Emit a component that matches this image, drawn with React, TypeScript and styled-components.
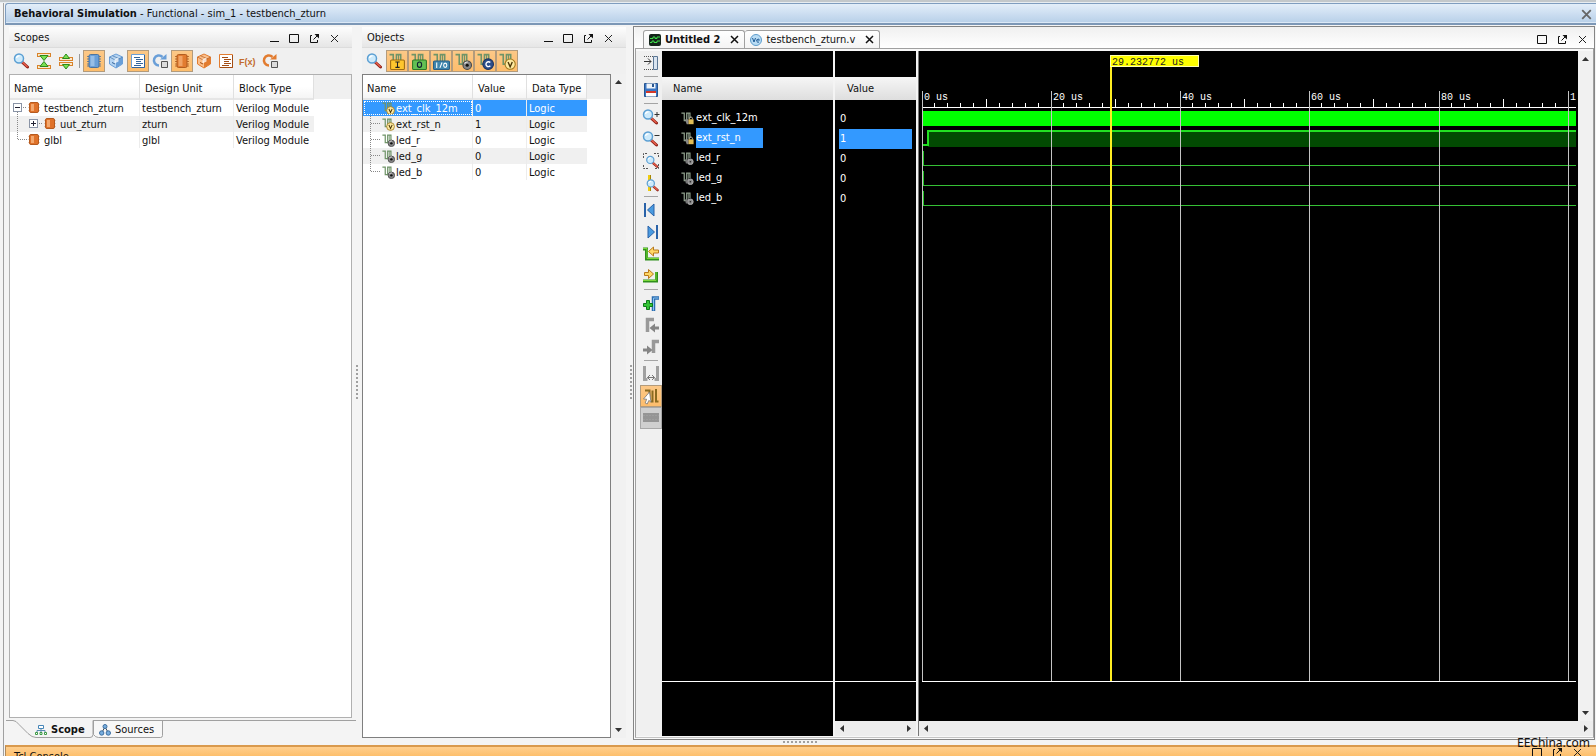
import React from 'react';
import styled, { createGlobalStyle, css } from 'styled-components';

const Global = createGlobalStyle`
  *, *::before, *::after { box-sizing: border-box; }
  html, body, #root { height: 100%; }
  body {
    margin: 0;
    overflow: hidden;
    background: #f4f4f4;
    color: #111;
    font: 11px/16px Tahoma, "DejaVu Sans Condensed", "DejaVu Sans", sans-serif;
  }
  button { font: inherit; color: inherit; background: none; border: 0; padding: 0; margin: 0; }
  ul { list-style: none; margin: 0; padding: 0; }
  h1, h2 { font: inherit; margin: 0; }
  svg { display: block; flex: none; }
`;

/* ---------- shell ---------- */

const Shell = styled.div`
  position: relative;
  display: flex;
  flex-direction: column;
  height: 100vh;
  overflow: hidden;
`;

const TopStrip = styled.div`
  flex: 0 0 3px;
  background: #c3c8cb;
  border-bottom: 1px solid #e8edf1;
`;

const Frame = styled.div`
  flex: 1;
  min-height: 0;
  display: flex;
  flex-direction: column;
  margin-left: 3px;
  border-left: 1px solid #a0a0a0;
  padding-left: 1px;
`;

const TitleBar = styled.header`
  flex: 0 0 22px;
  display: flex;
  align-items: center;
  justify-content: space-between;
  padding: 1px 0 0 8px;
  border: 1px solid #7f9dbf;
  border-right: 0;
  border-bottom: 2px solid #7c97b6;
  border-radius: 3px 0 0 0;
  background: linear-gradient(#e3eef9, #cfe0f2 45%, #b7cfe8);
  box-shadow: inset 0 -1px 0 #dbe8f6;
`;

const Main = styled.main`
  flex: 1;
  min-height: 0;
  display: flex;
`;

const SashColumn = styled.div<{ $width: number; $end?: boolean }>`
  flex: 0 0 ${(p) => p.$width}px;
  display: flex;
  align-items: center;
  justify-content: ${(p) => (p.$end ? 'flex-end' : 'center')};
`;

const SashRow = styled.div`
  flex: 0 0 5px;
  display: flex;
  align-items: center;
  justify-content: center;
`;

const Console = styled.section`
  flex: 0 0 11px;
  display: flex;
  justify-content: space-between;
  overflow: hidden;
  padding: 2px 9px 0 8px;
  border-top: 2px solid #d99a4e;
  border-left: 1px solid #b08a5a;
  background: linear-gradient(#ffcf8e, #fdbf6c);
`;

const ConsoleTitle = styled.h2`
  line-height: 16px;
`;

const Watermark = styled.div`
  position: absolute;
  right: 6px;
  bottom: 4px;
  font: 12px/18px "Noto Sans", sans-serif;
  color: #111;
`;

/* ---------- docked panels ---------- */

const Panel = styled.section<{ $width: number }>`
  flex: 0 0 ${(p) => p.$width}px;
  min-width: 0;
  display: flex;
  flex-direction: column;
  padding: 2px 0;
`;

const PanelHeader = styled.div`
  flex: 0 0 21px;
  display: flex;
  align-items: center;
  justify-content: space-between;
  padding: 2px 8px 0 5px;
  background: linear-gradient(#fdfdfd, #e6e6e6);
  border-bottom: 1px solid #dcdcdc;
`;

const Controls = styled.div`
  display: flex;
  align-items: center;
`;

const ControlButton = styled.button`
  width: 20px;
  height: 18px;
  display: flex;
  align-items: center;
  justify-content: center;
`;

const ToolBar = styled.div`
  flex: 0 0 26px;
  display: flex;
  align-items: center;
  padding-left: 2px;
  background: #f0f0f0;
`;

const ToolButton = styled.button<{ $on?: boolean; $dim?: boolean }>`
  width: 22px;
  height: 22px;
  flex: none;
  display: flex;
  align-items: center;
  justify-content: center;
  ${(p) =>
    p.$on &&
    css`
      background: linear-gradient(#fcc887, #fdbd6c);
      border: 1px solid #b39b7c;
    `}
  ${(p) =>
    p.$dim &&
    css`
      background: #cfcfcf;
      border: 1px solid #a8a8a8;
    `}
`;

const ToolDivider = styled.div`
  width: 6px;
  height: 14px;
  padding-left: 2px;
  &::before {
    content: '';
    display: block;
    width: 1px;
    height: 14px;
    background: #999;
  }
`;

const PanelBody = styled.div`
  flex: 1;
  min-height: 0;
  display: flex;
`;

const GridPane = styled.div<{ $dark?: boolean }>`
  flex: 1;
  min-width: 0;
  border: 1px solid ${(p) => (p.$dark ? '#7f7f7f' : '#b0b0b0')};
  background: linear-gradient(#f0f0f0, #f0f0f0) 0 0 / 100% 24px no-repeat, #fff;
`;

const Grid = styled.table<{ $width: number }>`
  width: ${(p) => p.$width}px;
  table-layout: fixed;
  border-collapse: separate;
  border-spacing: 0;
`;

const HeadCell = styled.th`
  height: 25px;
  padding: 4px 0 0 4px;
  text-align: left;
  font-weight: normal;
  white-space: nowrap;
  border-right: 1px solid #e0e0e0;
  border-bottom: 2px solid #e6e6e6;
  background: linear-gradient(#fff, #fff 50%, #f5f5f5);
  & + & { padding-left: 5px; }
`;

const Row = styled.tr<{ $striped?: boolean; $selected?: boolean }>`
  background: ${(p) => (p.$selected ? '#3399ff' : p.$striped ? '#f0f0f0' : '#fff')};
  color: ${(p) => (p.$selected ? '#fff' : 'inherit')};
`;

const Cell = styled.td<{ $focus?: boolean; $tree?: boolean }>`
  height: 16px;
  line-height: 14px;
  padding: ${(p) => (p.$tree ? 0 : 2)}px 0 0 2px;
  white-space: nowrap;
  border-right: 1px solid #ececec;
  &:last-child { border-right: 0; }
  ${(p) =>
    p.$focus &&
    css`
      outline: 1px dotted #fff;
      outline-offset: -2px;
    `}
`;

const TreeCell = styled.div`
  display: flex;
  align-items: center;
  height: 16px;
`;

const TreeLabel = styled.span<{ $gap: number }>`
  margin-left: ${(p) => p.$gap}px;
  padding-top: 2px;
`;

const Label = styled.span`
  margin-left: 4px;
`;

const ScrollColumn = styled.div`
  flex: 0 0 15px;
  display: flex;
  flex-direction: column;
  align-items: center;
  justify-content: space-between;
  padding: 4px 0;
  background: #f1f1f1;
`;

const ScrollRow = styled.div`
  flex: 0 0 15px;
  display: flex;
  align-items: center;
  justify-content: space-between;
  padding: 0 4px;
  background: #ededed;
`;

/* Right edge of the wave pane: the vertical bar above the end of the horizontal one. */
const ScrollSide = styled.div`
  flex: 0 0 14px;
  display: flex;
  flex-direction: column;
  & > :first-child { flex: 1; min-height: 0; }
`;

const BottomTabs = styled.div`
  position: relative;
  flex: 0 0 20px;
  display: flex;
  margin: 0 -3px;
  padding-top: 2px;
`;

const BottomTabShape = styled.svg`
  position: absolute;
  left: 0;
  top: 2px;
`;

const BottomTab = styled.button<{ $active?: boolean }>`
  position: relative;
  height: 18px;
  width: ${(p) => (p.$active ? 87 : 69)}px;
  display: flex;
  align-items: center;
  padding-top: 2px;
  padding-left: ${(p) => (p.$active ? 29 : 6)}px;
  font-weight: ${(p) => (p.$active ? 'bold' : 'normal')};
`;

/* ---------- waveform editor ---------- */

const Editor = styled.section`
  flex: 1;
  min-width: 0;
  display: flex;
  flex-direction: column;
  margin: 1px 1px 0 0;
  border: 1px solid #858585;
  padding: 0 0 1px 1px;
  background: #fafafa;
`;

const EditorTabs = styled.div`
  flex: 0 0 21px;
  display: flex;
  align-items: flex-end;
  padding-left: 8px;
  background: linear-gradient(#f0f0f0, #fff);
`;

const EditorTab = styled.button<{ $active?: boolean }>`
  height: 18px;
  display: flex;
  align-items: center;
  padding: 0 5px;
  border: 1px solid #a0a0a0;
  border-bottom: 0;
  border-radius: 3px 3px 0 0;
  background: linear-gradient(#fff, #f4f4f4);
  font-weight: ${(p) => (p.$active ? 'bold' : 'normal')};
  & + & { border-left: 0; }
  & svg:last-child { margin-left: 10px; }
`;

const EditorControls = styled(Controls)`
  margin-left: auto;
  padding-right: 2px;
`;

const EditorBody = styled.div`
  flex: 1;
  min-height: 0;
  display: flex;
  border: 1px solid #a0a0a0;
  border-bottom-color: #c4c4c4;
  padding: 2px 0 1px 0;
  background: #f8f8f8;
`;

const SideTools = styled.div`
  flex: 0 0 26px;
  display: flex;
  flex-direction: column;
  align-items: flex-end;
  padding-top: 1px;
  background: #f0f0f0;
`;

const SideDivider = styled.div`
  flex: 0 0 5px;
  width: 14px;
  margin-right: 4px;
  padding-top: 2px;
  &::before {
    content: '';
    display: block;
    height: 1px;
    background: #a4a4a4;
  }
`;

const SignalPane = styled.div<{ $width: number }>`
  flex: 0 0 ${(p) => p.$width}px;
  display: flex;
  flex-direction: column;
  padding-top: 26px;
  box-sizing: content-box;
  border-right: 2px solid #f4f4f4;
  background: #000;
  color: #fff;
`;

const SignalHeader = styled.div<{ $indent: number }>`
  flex: 0 0 22px;
  line-height: 23px;
  padding-left: ${(p) => p.$indent}px;
  background: linear-gradient(#f6f6f6, #dedede);
  color: #111;
`;

const SignalList = styled.ul<{ $top: number }>`
  flex: 1;
  min-height: 0;
  padding-top: ${(p) => p.$top}px;
  border-bottom: 1px solid #fff;
`;

const Signal = styled.li`
  display: flex;
  align-items: center;
  height: 20px;
  padding-left: 19px;
`;

const SignalName = styled.span<{ $selected?: boolean }>`
  height: 20px;
  line-height: 20px;
  width: 67px;
  margin-left: 2px;
  background: ${(p) => (p.$selected ? '#3399ff' : 'transparent')};
`;

const SignalValue = styled.li<{ $selected?: boolean }>`
  height: 20px;
  line-height: 20px;
  margin: 0 4px;
  padding-left: 1px;
  background: ${(p) => (p.$selected ? '#3399ff' : 'transparent')};
`;

const PaneFooter = styled.div<{ $height: number }>`
  flex: 0 0 ${(p) => p.$height}px;
  background: #000;
`;

const WavePane = styled.div`
  flex: 1;
  min-width: 0;
  display: flex;
  flex-direction: column;
  border-left: 1px solid #777;
  background: #000;
`;

const WavePlot = styled.div`
  position: relative;
  flex: 1;
  min-height: 0;
  margin: 0 2px 0 3px;
  border-bottom: 1px solid #fff;
`;

const WaveSvg = styled.svg`
  position: absolute;
  inset: 0;
  width: 100%;
  height: 100%;
  overflow: hidden;
  font: 10px "Liberation Mono", monospace;
`;

/* ---------- icons ---------- */

const MinimizeIcon = () => (
  <svg width="11" height="11"><path d="M1 8.500h9" stroke="#111" /></svg>
);
const MaximizeIcon = () => (
  <svg width="11" height="11"><path d="M.5 1.500h9v8h-9z" fill="none" stroke="#111" /></svg>
);
const FloatIcon = () => (
  <svg width="11" height="11"><path d="M3 2.500H1.500v7h7V7M4.500 6.500l4-4" fill="none" stroke="#111" /><path d="M5.500 1H10v4.500z" fill="#111" /></svg>
);
const CloseIcon = ({ weight = 1, color = '#222', size = 9 }: { weight?: number; color?: string; size?: number }) => (
  <svg width={size} height={size} viewBox="0 0 9 9"><path d="M1 1l7 7M8 1L1 8" stroke={color} strokeWidth={weight} /></svg>
);

const LensShape = () => (
  <>
    <path d="M9.500 9.500l5 4.500" stroke="#8d1f16" strokeWidth="3" strokeLinecap="round" />
    <path d="M9.500 9.300l4.600 4.200" stroke="#e8604c" strokeWidth="1.500" strokeLinecap="round" />
    <circle cx="6" cy="5.500" r="4.500" fill="#cdeafb" stroke="#5b9fd3" strokeWidth="1.500" />
    <path d="M3.500 5a2.500 2.500 0 0 1 3-2" stroke="#fff" fill="none" strokeWidth="1.300" />
  </>
);
const LensIcon = ({ mark }: { mark?: '+' | '-' }) => (
  <svg width="18" height="16" viewBox="0 0 18 16">
    <LensShape />
    {mark && <path d={mark === '+' ? 'M12.500 5.500h5M15 3v5' : 'M12.500 4.500h5'} stroke="#333" />}
  </svg>
);
const FitIcon = () => (
  <svg width="18" height="18" viewBox="0 0 18 18">
    <path d="M1.500 6V1.500H6M12 1.500h4.500V6M16.500 12v4.500H12M6 16.500H1.500V12" fill="none" stroke="#555" strokeDasharray="2 1" />
    <g transform="translate(3.500 3.500) scale(.8)"><LensShape /></g>
  </svg>
);
const CursorZoomIcon = () => (
  <svg width="18" height="18" viewBox="0 0 18 18">
    <path d="M7.500 1v16" stroke="#f0cc10" strokeWidth="3" />
    <path d="M8.500 1v5M8.500 13v4" stroke="#a88600" />
    <g transform="translate(4 5) scale(.8)"><LensShape /></g>
  </svg>
);
const CollapseAllIcon = () => (
  <svg width="16" height="16" viewBox="0 0 16 16">
    <path d="M1 2h14M1 14h14" stroke="#d8822a" strokeWidth="4" />
    <path d="M2 2h12M2 14h12" stroke="#fbe9cc" strokeWidth="2" />
    <path d="M4 2.500h8L8 7.500zM4 13.500h8L8 8.500z" fill="#7ce052" stroke="#2b8b1c" />
  </svg>
);
const ExpandAllIcon = () => (
  <svg width="16" height="16" viewBox="0 0 16 16">
    <path d="M1 6h14M1 11h14" stroke="#d8822a" strokeWidth="4" />
    <path d="M2 6h12M2 11h12" stroke="#fbe9cc" strokeWidth="2" />
    <path d="M4.500 5.500h7L8 1zM4.500 11.500h7L8 16z" fill="#7ce052" stroke="#2b8b1c" />
  </svg>
);

const BLUE = { dark: '#35659b', mid: '#6a9fd8', light: '#b5d4f2' };
const ORANGE = { dark: '#a34d14', mid: '#e27c30', light: '#fbbf8b' };
type Tone = typeof BLUE;

const ChipIcon = ({ tone }: { tone: Tone }) => (
  <svg width="16" height="16" viewBox="0 0 16 16">
    <path d="M1 3.500h14M1 6h14M1 8.500h14M1 11h14M1 13h14" stroke={tone.dark} opacity=".7" />
    <rect x="3" y="1.500" width="10" height="13" rx="1.500" fill={tone.mid} stroke={tone.dark} strokeOpacity=".8" />
    <path d="M4.500 3h4v10h-4z" fill={tone.light} opacity=".6" />
  </svg>
);
const TreeChipIcon = () => (
  <svg width="14" height="14" viewBox="0 0 14 14">
    <path d="M1.500 3.500h11M1.500 6.500h11M1.500 9.500h11" stroke="#a34d14" opacity=".5" />
    <rect x="2.500" y="1.500" width="9" height="10" rx="1.500" fill="#df722a" stroke="#b65a1e" />
    <path d="M4 3h3v7H4z" fill="#fbbf8b" opacity=".7" />
  </svg>
);
const CubeIcon = ({ tone }: { tone: Tone }) => (
  <svg width="16" height="16" viewBox="0 0 16 16">
    <path d="M8 1l6.500 3v7L8 15l-6.500-4V4z" fill={tone.light} stroke={tone.mid} />
    <path d="M8 7.500v7.500l6-4V4.500z" fill={tone.mid} />
    <path d="M4.500 2.800l7 3M1.500 4L8 7.500 14.500 4" stroke={tone.dark} strokeOpacity=".6" fill="none" />
    <path d="M6.500 6.500l4-2v4l-4 2z" fill="#fff" opacity=".75" />
    <path d="M4 9.500l3 1.500" stroke={tone.dark} />
  </svg>
);
const DocIcon = ({ tone }: { tone: Tone }) => (
  <svg width="16" height="16" viewBox="0 0 16 16">
    <path d="M1.500 1.500h13v13h-13z" fill="#fff" stroke={tone.mid} />
    <path d="M14.500 2v12.500H2" fill="none" stroke={tone.dark} />
    <path d="M4 4.500h6M6 6.500h7M6 8.500h5M6 10.500h7M4 12.500h7" stroke={tone.dark} />
  </svg>
);
const CycleIcon = ({ tone }: { tone: Tone }) => (
  <svg width="18" height="16" viewBox="0 0 18 16">
    <path d="M11.500 4A5 5 0 1 0 8 12.500" fill="none" stroke={tone.mid} strokeWidth="2.500" />
    <path d="M9 6.500h6.500V1z" fill={tone.mid} />
    <path d="M10.500 8.500h6v6h-6z" fill="#dcdcdc" stroke="#555" />
  </svg>
);
const FnIcon = () => (
  <svg width="18" height="16" viewBox="0 0 18 16">
    <text x="0" y="11.500" fontSize="9" fontWeight="bold" fontFamily="Liberation Sans, sans-serif" fill="#c26b2c">F(x)</text>
  </svg>
);

const SignalIcon = ({ kind, size = 13, wire = '#6f9468' }: { kind: 'I' | 'O' | 'I/O' | 'int' | 'C' | 'V' | 'lock' | 'gray'; size?: number; wire?: string }) => (
  <svg width={size} height={size} viewBox="0 0 16 16">
    <path d="M.5 1.500H4v9h3V1.500h4v6" fill="none" stroke={wire} strokeWidth="1.500" />
    <path d="M9 1.500v7" stroke={wire} />
    {kind === 'I' && <><rect x="1.500" y="6.500" width="13" height="9" rx="1" fill="#ffc62e" stroke="#a06c10" /><path d="M6 8.500h4M8 8.500v5M6 13.500h4" stroke="#222" /></>}
    {kind === 'O' && <><rect x="1.500" y="6.500" width="13" height="9" rx="1" fill="#63c054" stroke="#2c7a26" /><ellipse cx="8" cy="11" rx="2" ry="2.500" fill="none" stroke="#123" /></>}
    {kind === 'I/O' && <><rect x=".5" y="7.500" width="15" height="8" rx="1" fill="#3f86ad" stroke="#2a5f86" /><path d="M3.500 9v5M8.500 9l-2 5" stroke="#fff" /><ellipse cx="11.500" cy="11.500" rx="1.500" ry="2" fill="none" stroke="#fff" /></>}
    {kind === 'int' && <><circle cx="11.500" cy="11.500" r="4" fill="#888" stroke="#444" /><circle cx="11.500" cy="11.500" r="1.500" fill="#111" /><path d="M9 10a3 3 0 0 1 3-1.500" fill="none" stroke="#eee" /></>}
    {kind === 'C' && <><circle cx="10.500" cy="10.500" r="5" fill="#2c4f8c" stroke="#1c335e" /><path d="M12.500 9a2.300 2.300 0 1 0 0 3" fill="none" stroke="#fff" strokeWidth="1.300" /></>}
    {kind === 'V' && <><circle cx="10.500" cy="10.500" r="4.800" fill="#fde9a0" stroke="#a07a1c" /><path d="M8.500 8.500l2 4.500 2-4.500" fill="none" stroke="#4a3608" strokeWidth="1.300" /></>}
    {kind === 'lock' && <><rect x="9" y="9" width="6.500" height="6" fill="#e0bd58" /><path d="M10.500 9V7.500a1.800 1.800 0 0 1 3.500 0V9" fill="none" stroke="#d8d0b8" /><path d="M5 9h4v6H7z" fill="#888" /></>}
    {kind === 'gray' && <><circle cx="11.500" cy="12" r="3.500" fill="#8d8d8d" stroke="#bbb" /><circle cx="11.500" cy="12" r="1" fill="#222" /><path d="M5 9h3v5H6z" fill="#777" /></>}
  </svg>
);

const DockIcon = () => (
  <svg width="16" height="16" viewBox="0 0 16 16">
    <path d="M1 1.500h10M1 14.500h10" stroke="#555" strokeDasharray="1 1" />
    <path d="M1 6.500h7M5 3.500l3 3-3 3" fill="none" stroke="#333" />
    <path d="M10.500 1.500h4v13h-4z" fill="#d9e4f0" stroke="#5a7694" />
  </svg>
);
const SaveIcon = () => (
  <svg width="16" height="16" viewBox="0 0 16 16">
    <path d="M1.500 1.500h13v13h-13z" fill="#3b77c4" stroke="#27558f" />
    <path d="M3.500 1.500h9v5h-9z" fill="#eef3f8" />
    <path d="M9 2h2v3H9z" fill="#27558f" />
    <path d="M3 9h10v5.500H3z" fill="#fff" />
    <path d="M3 10h10" stroke="#d43a2a" strokeWidth="2" />
  </svg>
);
const StepIcon = ({ forward }: { forward?: boolean }) => (
  <svg width="16" height="16" viewBox="0 0 16 16">
    <g transform={forward ? 'translate(16 0) scale(-1 1)' : undefined}>
      <path d="M2 1v14" stroke="#2a62a8" strokeWidth="2" />
      <path d="M11 2v12L4.500 8z" fill="#4a9be0" stroke="#2a62a8" />
    </g>
  </svg>
);
const EdgeIcon = ({ forward }: { forward?: boolean }) => (
  <svg width="16" height="16" viewBox="0 0 16 16">
    <path d={forward ? 'M0 13h13.500V4' : 'M0 3h3.500v10H16'} fill="none" stroke="#2f8f1c" strokeWidth="3" />
    <path d={forward ? 'M0 12.500h13V4' : 'M0 2.500h4v10H16'} fill="none" stroke="#7bd83a" />
    {forward
      ? <path d="M1.500 4.500h4v-3l5 4.500-5 4.500v-3h-4z" fill="#ffd866" stroke="#b8791c" />
      : <path d="M15.500 4h-5V1L5.500 5.500l5 4.500V7h5z" fill="#ffd866" stroke="#b8791c" />}
  </svg>
);
const AddMarkerIcon = () => (
  <svg width="18" height="16" viewBox="0 0 18 16">
    <path d="M11.500 16V3H17" fill="none" stroke="#2b6cb0" strokeWidth="3.500" />
    <path d="M11.500 15.500V3H16.500" fill="none" stroke="#8cc4f0" />
    <path d="M4.500 5.500h3v3h3v3h-3v3h-3v-3h-3v-3h3z" fill="#35c435" stroke="#0d7a18" />
  </svg>
);
const GrayMarkerIcon = ({ forward }: { forward?: boolean }) => (
  <svg width="18" height="16" viewBox="0 0 18 16">
    {forward
      ? <><path d="M11.500 14V2.500H17" fill="none" stroke="#999" strokeWidth="3.500" /><path d="M1 9.500h4V6.500l5.500 4.500L5 15.500v-3H1z" fill="#858585" /></>
      : <><path d="M5.500 15V2.500H12" fill="none" stroke="#999" strokeWidth="3.500" /><path d="M17 9.500h-4V6.500l-5.500 4.500 5.500 4.500v-3h4z" fill="#858585" /></>}
  </svg>
);
const SwapIcon = () => (
  <svg width="18" height="16" viewBox="0 0 18 16">
    <path d="M2.500 0v13.500h3M15.500 0v13.500h-3" fill="none" stroke="#a0a0a0" strokeWidth="3" />
    <path d="M5.500 11.500h7M8 9l-2.500 2.500L8 14M10 9l2.500 2.500L10 14" fill="none" stroke="#777" />
  </svg>
);
const SnapIcon = () => (
  <svg width="18" height="18" viewBox="0 0 18 18">
    <path d="M3 3.500h4.500V13M9 14.500h1.500v-11M14 2v12.500h2.500" fill="none" stroke="#8a6a20" strokeWidth="2" />
    <path d="M7.500 5l-6 7 3.200.2L3.200 16l2 1 1.700-3.700 2.100 2z" fill="#fff" stroke="#777" strokeWidth=".8" />
  </svg>
);
const BarsIcon = () => (
  <svg width="18" height="10"><path d="M1 0h16v9H1z" fill="#959595" /><path d="M1 2.500h16M1 6.500h16" stroke="#9e9e9e" strokeDasharray="2 1" /></svg>
);

const WaveTabIcon = () => (
  <svg width="12" height="12" viewBox="0 0 12 12">
    <rect width="12" height="12" rx="2" fill="#14241a" />
    <path d="M1 4.500h3V3h2v1.500h2V3h3M1 8.500h2V7h2v1.500h3V7h3" fill="none" stroke="#3fe04a" />
  </svg>
);
const VerilogTabIcon = () => (
  <svg width="12" height="12" viewBox="0 0 12 12">
    <circle cx="6" cy="6" r="5.500" fill="#b9dcf4" stroke="#5c9ccc" />
    <path d="M2.500 4L4 8l1.500-4M6.500 6h3A1.500 1.500 0 1 0 9 8" fill="none" stroke="#1d5b96" />
  </svg>
);
const HierarchyIcon = () => (
  <svg width="12" height="12" viewBox="0 0 12 12">
    <path d="M6 4v3M2 9V6.500h8V9M6 6v3" fill="none" stroke="#5a8ab0" />
    <path d="M3.500 1.500h5v3h-5z" fill="#fff" stroke="#4686b8" />
    <path d="M.5 8.500h2v2h-2zM5 8.500h2v2H5zM9.500 8.500h2v2h-2z" fill="#fff" stroke="#3d9a44" />
  </svg>
);
const SourcesIcon = () => (
  <svg width="12" height="12" viewBox="0 0 12 12">
    <path d="M6 3L2.500 9M6 3l3.500 6" stroke="#345" />
    <circle cx="6" cy="2.500" r="2" fill="#79aede" stroke="#3c6ea0" />
    <circle cx="2.700" cy="9" r="2.200" fill="#79aede" stroke="#3c6ea0" />
    <circle cx="9.300" cy="9" r="2.200" fill="#79aede" stroke="#3c6ea0" />
  </svg>
);

const Arrow = ({ dir }: { dir: 'up' | 'down' | 'left' | 'right' }) => {
  const d = { up: 'M0 6l3.500-4L7 6z', down: 'M0 1h7L3.500 5z', left: 'M5 0v7L1 3.500z', right: 'M2 0v7l4-3.500z' }[dir];
  return <svg width="7" height="7"><path d={d} fill="#333" /></svg>;
};

const Dots = ({ vertical, count }: { vertical?: boolean; count: number }) => (
  <svg width={vertical ? 3 : count * 4} height={vertical ? count * 4 : 3}>
    {Array.from({ length: count }, (_, i) => (
      <rect key={i} x={vertical ? 0 : i * 4} y={vertical ? i * 4 : 0} width="2" height="2" fill="#a0a0a0" />
    ))}
  </svg>
);

/* Guide lines and the expander to the left of a tree entry. */
const Guide = ({ width, d, box, open }: { width: number; d: string; box?: number; open?: boolean }) => (
  <svg width={width} height="16">
    <path d={d} fill="none" stroke="#888" strokeDasharray="1 1" />
    {box !== undefined && (
      <>
        <rect x={box + 0.5} y="3.500" width="8" height="8" fill="#fff" stroke="#8a94a6" />
        <path d={`M${box + 2} 7.500h5${open ? '' : `M${box + 4.5} 5v5`}`} stroke="#223" />
      </>
    )}
  </svg>
);

/* ---------- content ---------- */

const PanelControls = () => (
  <Controls>
    <ControlButton aria-label="Minimize"><MinimizeIcon /></ControlButton>
    <ControlButton aria-label="Maximize"><MaximizeIcon /></ControlButton>
    <ControlButton aria-label="Float"><FloatIcon /></ControlButton>
    <ControlButton aria-label="Close"><CloseIcon /></ControlButton>
  </Controls>
);

const scopeTools = [
  { name: 'Modules', icon: <ChipIcon tone={BLUE} />, on: true },
  { name: 'Packages', icon: <CubeIcon tone={BLUE} /> },
  { name: 'Processes', icon: <DocIcon tone={BLUE} />, on: true },
  { name: 'Blocks', icon: <CycleIcon tone={BLUE} /> },
  { name: 'Verilog modules', icon: <ChipIcon tone={ORANGE} />, on: true },
  { name: 'Verilog packages', icon: <CubeIcon tone={ORANGE} /> },
  { name: 'Verilog processes', icon: <DocIcon tone={ORANGE} /> },
  { name: 'Functions', icon: <FnIcon /> },
  { name: 'Verilog blocks', icon: <CycleIcon tone={ORANGE} /> },
];

const scopes = [
  { name: 'testbench_zturn', unit: 'testbench_zturn', width: 15, d: 'M5.500 12v4M11 7.500h4', box: 1, open: true },
  { name: 'uut_zturn', unit: 'zturn', width: 31, d: 'M5.500 0v16M27 7.500h4', box: 17 },
  { name: 'glbl', unit: 'glbl', width: 15, d: 'M5.500 0v8M6 7.500h9' },
];

const ScopesPanel = () => (
  <Panel $width={343}>
    <PanelHeader><h2>Scopes</h2><PanelControls /></PanelHeader>
    <ToolBar>
      <ToolButton aria-label="Search"><LensIcon /></ToolButton>
      <ToolButton aria-label="Collapse all"><CollapseAllIcon /></ToolButton>
      <ToolButton aria-label="Expand all"><ExpandAllIcon /></ToolButton>
      <ToolDivider />
      {scopeTools.map((t) => (
        <ToolButton key={t.name} aria-label={t.name} $on={t.on}>{t.icon}</ToolButton>
      ))}
    </ToolBar>
    <PanelBody>
      <GridPane>
        <Grid $width={304}>
          <colgroup><col style={{ width: 130 }} /><col style={{ width: 94 }} /><col style={{ width: 80 }} /></colgroup>
          <thead><tr><HeadCell>Name</HeadCell><HeadCell>Design Unit</HeadCell><HeadCell>Block Type</HeadCell></tr></thead>
          <tbody>
            {scopes.map((s, i) => (
              <Row key={s.name} $striped={i % 2 === 1}>
                <Cell $tree>
                  <TreeCell>
                    <Guide width={s.width} d={s.d} box={s.box} open={s.open} />
                    <TreeChipIcon />
                    <TreeLabel $gap={3}>{s.name}</TreeLabel>
                  </TreeCell>
                </Cell>
                <Cell>{s.unit}</Cell>
                <Cell>Verilog Module</Cell>
              </Row>
            ))}
          </tbody>
        </Grid>
      </GridPane>
    </PanelBody>
    <BottomTabs>
      <BottomTabShape width="350" height="19">
        <path d="M156.500 .5v15q0 2-2 2h-62q-3 0-5-3V.5z" fill="#f7f7f7" stroke="#a0a0a0" />
        <path d="M0 .5h7q3 0 6 4l9 9q4 4 8 4h54q3 0 3-3V.5H350" fill="none" stroke="#a0a0a0" />
      </BottomTabShape>
      <BottomTab $active><HierarchyIcon /><Label>Scope</Label></BottomTab>
      <BottomTab><SourcesIcon /><Label>Sources</Label></BottomTab>
    </BottomTabs>
  </Panel>
);

const objects: { name: string; value: string; kind: 'V' | 'int' }[] = [
  { name: 'ext_clk_12m', value: '0', kind: 'V' },
  { name: 'ext_rst_n', value: '1', kind: 'V' },
  { name: 'led_r', value: '0', kind: 'int' },
  { name: 'led_g', value: '0', kind: 'int' },
  { name: 'led_b', value: '0', kind: 'int' },
];

const objectTools: { name: string; kind: 'I' | 'O' | 'I/O' | 'int' | 'C' | 'V' }[] = [
  { name: 'Inputs', kind: 'I' },
  { name: 'Outputs', kind: 'O' },
  { name: 'Bidirectional', kind: 'I/O' },
  { name: 'Internal signals', kind: 'int' },
  { name: 'Constants', kind: 'C' },
  { name: 'Variables', kind: 'V' },
];

const ObjectsPanel = () => (
  <Panel $width={264}>
    <PanelHeader><h2>Objects</h2><PanelControls /></PanelHeader>
    <ToolBar>
      <ToolButton aria-label="Search"><LensIcon /></ToolButton>
      {objectTools.map((t) => (
        <ToolButton key={t.name} aria-label={t.name} $on><SignalIcon kind={t.kind} size={17} /></ToolButton>
      ))}
    </ToolBar>
    <PanelBody>
      <GridPane $dark>
        <Grid $width={224}>
          <colgroup><col style={{ width: 110 }} /><col style={{ width: 54 }} /><col style={{ width: 60 }} /></colgroup>
          <thead><tr><HeadCell>Name</HeadCell><HeadCell>Value</HeadCell><HeadCell>Data Type</HeadCell></tr></thead>
          <tbody>
            {objects.map((o, i) => (
              <Row key={o.name} $striped={i % 2 === 1} $selected={i === 0}>
                <Cell $tree $focus={i === 0}>
                  <TreeCell>
                    <Guide width={17} d={i === 0 ? '' : `M5.500 0v${i === objects.length - 1 ? 8 : 16}M6 7.500h9`} />
                    <SignalIcon kind={o.kind} />
                    <TreeLabel $gap={1}>{o.name}</TreeLabel>
                  </TreeCell>
                </Cell>
                <Cell>{o.value}</Cell>
                <Cell>Logic</Cell>
              </Row>
            ))}
          </tbody>
        </Grid>
      </GridPane>
      <ScrollColumn><Arrow dir="up" /><Arrow dir="down" /></ScrollColumn>
    </PanelBody>
  </Panel>
);

const sideTools: { name: string; icon?: React.ReactNode; on?: boolean; dim?: boolean }[] = [
  { name: 'Dock', icon: <DockIcon /> },
  { name: '' },
  { name: 'Save', icon: <SaveIcon /> },
  { name: '' },
  { name: 'Zoom in', icon: <LensIcon mark="+" /> },
  { name: 'Zoom out', icon: <LensIcon mark="-" /> },
  { name: 'Zoom fit', icon: <FitIcon /> },
  { name: 'Zoom to cursor', icon: <CursorZoomIcon /> },
  { name: '' },
  { name: 'Go to start', icon: <StepIcon /> },
  { name: 'Go to end', icon: <StepIcon forward /> },
  { name: 'Previous transition', icon: <EdgeIcon /> },
  { name: 'Next transition', icon: <EdgeIcon forward /> },
  { name: '' },
  { name: 'Add marker', icon: <AddMarkerIcon /> },
  { name: 'Previous marker', icon: <GrayMarkerIcon /> },
  { name: 'Next marker', icon: <GrayMarkerIcon forward /> },
  { name: '' },
  { name: 'Swap cursors', icon: <SwapIcon /> },
  { name: 'Snap to transition', icon: <SnapIcon />, on: true },
  { name: 'Floating ruler', icon: <BarsIcon />, dim: true },
];

const GRID = [0, 129, 258, 387, 517, 646];
const TICKS = [13, 26, 39, 52, 65, 78, 91, 104, 117];

const Waveform = () => (
  <WaveSvg role="img" aria-label="Signal waveforms" shapeRendering="crispEdges">
    <rect x="0" y="56" width="100%" height="1" fill="#fff" />
    {GRID.map((x) => TICKS.map((t, i) => (
      <rect key={`${x}-${t}`} x={x + t - 1} y={i === 4 ? 48 : 52} width="1" height={i === 4 ? 8 : 4} fill="#fff" />
    )))}
    <rect x="0" y="60" width="100%" height="15" fill="#0f0" />
    <rect x="6" y="81" width="100%" height="15" fill="#024a02" />
    <path d="M-1 94h7V80h3000" fill="none" stroke="#22e022" strokeWidth="2" />
    {[114, 134, 154].map((y) => (
      <g key={y}>
        <rect x="0" y={y} width="100%" height="1" fill="#35c035" />
        <rect x="0" y={y - 14} width="2" height="14" fill="#22c022" />
      </g>
    ))}
    {GRID.map((x, i) => (
      <g key={x}>
        <rect x={x} y="40" width="1" height="100%" fill="#c4c4c4" />
        <text x={x + 2} y="49" fill="#fff">{`${i * 20} us`}</text>
      </g>
    ))}
    <rect x="188" y="4" width="2" height="100%" fill="#ffee22" />
    <rect x="188.500" y="4.500" width="88" height="11" fill="#ff0" stroke="#ffffb0" />
    <text x="190" y="14" fill="#222">29.232772 us</text>
  </WaveSvg>
);

const WaveEditor = () => (
  <Editor>
    <EditorTabs>
      <EditorTab $active><WaveTabIcon /><Label>Untitled 2</Label><CloseIcon weight={1.5} color="#111" /></EditorTab>
      <EditorTab><VerilogTabIcon /><Label>testbench_zturn.v</Label><CloseIcon weight={1.5} color="#111" /></EditorTab>
      <EditorControls>
        <ControlButton aria-label="Maximize"><MaximizeIcon /></ControlButton>
        <ControlButton aria-label="Float"><FloatIcon /></ControlButton>
        <ControlButton aria-label="Close"><CloseIcon /></ControlButton>
      </EditorControls>
    </EditorTabs>
    <EditorBody>
      <SideTools>
        {sideTools.map((t, i) =>
          t.icon
            ? <ToolButton key={i} aria-label={t.name} $on={t.on} $dim={t.dim}>{t.icon}</ToolButton>
            : <SideDivider key={i} />
        )}
      </SideTools>
      <SignalPane $width={171}>
        <SignalHeader $indent={11}>Name</SignalHeader>
        <SignalList $top={8}>
          {objects.map((o, i) => (
            <Signal key={o.name}>
              <SignalIcon kind={o.kind === 'V' ? 'lock' : 'gray'} wire="#8fa08c" />
              <SignalName $selected={i === 1}>{o.name}</SignalName>
            </Signal>
          ))}
        </SignalList>
        <PaneFooter $height={54} />
      </SignalPane>
      <SignalPane $width={81}>
        <SignalHeader $indent={12}>Value</SignalHeader>
        <SignalList $top={9}>
          {objects.map((o, i) => (
            <SignalValue key={o.name} $selected={i === 1}>{o.value}</SignalValue>
          ))}
        </SignalList>
        <PaneFooter $height={39} />
        <ScrollRow><Arrow dir="left" /><Arrow dir="right" /></ScrollRow>
      </SignalPane>
      <WavePane>
        <WavePlot><Waveform /></WavePlot>
        <PaneFooter $height={39} />
        <ScrollRow><Arrow dir="left" /></ScrollRow>
      </WavePane>
      <ScrollSide>
        <ScrollColumn><Arrow dir="up" /><Arrow dir="down" /></ScrollColumn>
        <ScrollRow><Arrow dir="right" /></ScrollRow>
      </ScrollSide>
    </EditorBody>
  </Editor>
);

export default function App() {
  return (
    <>
      <Global />
      <Shell>
        <TopStrip />
        <Frame>
          <TitleBar>
            <h1><b>Behavioral Simulation</b> - Functional - sim_1 - testbench_zturn</h1>
            <ControlButton aria-label="Close view"><CloseIcon weight={1.5} color="#666" size={11} /></ControlButton>
          </TitleBar>
          <Main>
            <SashColumn $width={4} />
            <ScopesPanel />
            <SashColumn $width={10}><Dots vertical count={9} /></SashColumn>
            <ObjectsPanel />
            <SashColumn $width={7} $end><Dots vertical count={9} /></SashColumn>
            <WaveEditor />
          </Main>
          <SashRow><Dots count={9} /></SashRow>
          <Console>
            <ConsoleTitle>Tcl Console</ConsoleTitle>
            <Controls>
              <ControlButton aria-label="Maximize"><MaximizeIcon /></ControlButton>
              <ControlButton aria-label="Float"><FloatIcon /></ControlButton>
              <ControlButton aria-label="Close"><CloseIcon /></ControlButton>
            </Controls>
          </Console>
        </Frame>
        <Watermark>EEChina.com</Watermark>
      </Shell>
    </>
  );
}
